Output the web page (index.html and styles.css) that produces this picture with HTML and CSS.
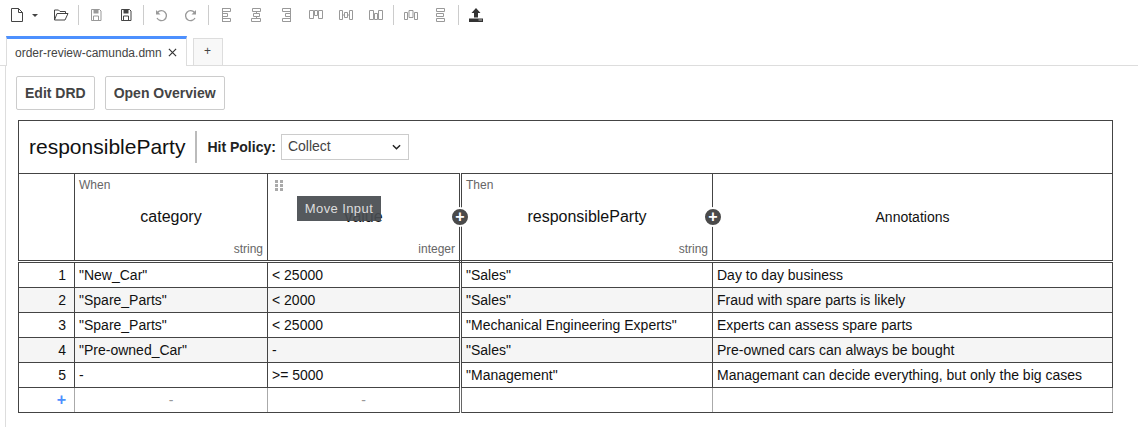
FILE: index.html
```html
<!DOCTYPE html>
<html lang="en">
<head>
<meta charset="utf-8">
<title>order-review-camunda.dmn</title>
<link rel="stylesheet" href="styles.css">
</head>
<body>
<div class="toolbar">
  <div class="group group-file">
    <svg class="ico dark" viewBox="0 0 16 16"><path d="M3.500 1.500h7l4 4v9h-11z M10.500 1.500v4h4"/></svg>
    <svg class="caret" viewBox="0 0 6 3"><path d="M0 0h6L3 3z"/></svg>
    <svg class="ico dark" viewBox="0 0 16 16"><path d="M1.500 13V3h4L7 4.500h5.500v2 M1.500 13H12l3-6.500H4z"/></svg>
  </div>
  <i class="sep"></i>
  <div class="group">
    <svg class="ico grey" viewBox="0 0 16 16"><path d="M3.500 2.500h8l1.500 1.500v9.500H3.500z"/><path class="fill" d="M5.500 3h5v3.500h-5z"/><path d="M5.500 9h5v4.500h-5z"/></svg>
    <svg class="ico dark" viewBox="0 0 16 16"><path d="M3.500 2.500h8l1.500 1.500v9.500H3.500z"/><path class="fill" d="M5.500 3h5v3.500h-5z"/><path d="M5.500 9h5v4.500h-5z"/></svg>
  </div>
  <i class="sep"></i>
  <div class="group">
    <svg class="ico grey wide" viewBox="0 0 16 16"><path d="M4.500 5.500A5 5 0 1 1 4 11"/><path class="fill" d="M3 3v4.500h4.500z"/></svg>
    <svg class="ico grey wide" viewBox="0 0 16 16"><path d="M11.500 5.500A5 5 0 1 0 12 11"/><path class="fill" d="M13 3v4.500H8.500z"/></svg>
  </div>
  <i class="sep"></i>
  <div class="group">
    <svg class="ico grey" viewBox="0 0 16 16"><path d="M4.500 1v14M4.500 1.500h8v3h-8M4.500 6.500h5v3h-5M4.500 11.500h8v3h-8"/></svg>
    <svg class="ico grey" viewBox="0 0 16 16"><path d="M4.500 1.500h8v3h-8zM5.500 6.500h6v3h-6zM3.500 11.500h9v3h-9zM8.500 4.500v2M8.500 9.500v2"/></svg>
    <svg class="ico grey" viewBox="0 0 16 16"><path d="M12.500 1v14M12.500 1.500h-8v3h8M12.500 6.500h-5v3h5M12.500 11.500h-8v3h8"/></svg>
    <svg class="ico grey" viewBox="0 0 16 16"><path d="M1.500 3.500h4v8h-4zM6.500 3.500h3v5h-3zM10.500 3.500h4v8h-4z"/></svg>
    <svg class="ico grey" viewBox="0 0 16 16"><path d="M1.500 3.500h3v9h-3zM6.500 5.500h3v5h-3zM11.500 3.500h3v9h-3zM4.500 8h2M9.500 8h2"/></svg>
    <svg class="ico grey" viewBox="0 0 16 16"><path d="M1.500 3.500h4v9h-4zM6.500 6.500h3v6h-3zM10.500 3.500h4v9h-4z"/></svg>
  </div>
  <i class="sep"></i>
  <div class="group">
    <svg class="ico grey" viewBox="0 0 16 16"><path d="M1.500 5.500h3v7h-3zM6 3.500h4v7H6zM11.500 5.500h3v7h-3z"/></svg>
    <svg class="ico grey" viewBox="0 0 16 16"><path d="M3.500 1.500h8v3h-8zM3.500 6.500h7v3h-7zM3.500 11.500h8v3h-8z"/></svg>
  </div>
  <i class="sep"></i>
  <div class="group">
    <svg class="ico solid" viewBox="0 0 16 16"><path d="M8 1l4.500 5H10v4.500H6V6H3.500zM1 11.500h14V15H1z"/><path class="slot" d="M10.500 12.500H14v1h-3.500z"/></svg>
  </div>
</div>

<div class="tabbar">
  <div class="tab">
    <span>order-review-camunda.dmn</span>
    <svg class="close" viewBox="0 0 10 10"><path d="M1 1l8 8M9 1l-8 8"/></svg>
  </div>
  <div class="tab-add">+</div>
</div>

<main class="editor">
  <div class="actions">
    <button class="btn">Edit DRD</button>
    <button class="btn">Open Overview</button>
  </div>

  <section class="decision">
    <header class="decision-head">
      <h1 class="decision-name">responsibleParty</h1>
      <b class="policy-label">Hit Policy:</b>
      <div class="policy-select"><span class="policy-value">Collect</span>
        <svg class="chev" viewBox="0 0 10 6"><path d="M1 1l4 4 4-4"/></svg>
      </div>
    </header>
    <table class="grid">
      <colgroup>
        <col class="c-idx"><col class="c-in"><col class="c-in2"><col class="c-out"><col class="c-ann">
      </colgroup>
      <thead>
        <tr>
          <th></th>
          <th><div class="hcell"><small class="kind">When</small><span class="hname">category</span><small class="htype">string</small></div></th>
          <th class="double"><div class="hcell">
            <span class="handle"><i></i><i></i><i></i><i></i><i></i><i></i></span>
            <span class="hname">value</span><small class="htype">integer</small>
            <span class="tooltip">Move Input</span>
            <span class="plus">+</span>
          </div></th>
          <th><div class="hcell"><small class="kind">Then</small><span class="hname">responsibleParty</span><small class="htype">string</small>
            <span class="plus">+</span>
          </div></th>
          <th><div class="hcell"><span class="hname ann">Annotations</span></div></th>
        </tr>
      </thead>
      <tbody>
        <tr><td class="idx">1</td><td>"New_Car"</td><td class="double">&lt; 25000</td><td>"Sales"</td><td>Day to day business</td></tr>
        <tr><td class="idx">2</td><td>"Spare_Parts"</td><td class="double">&lt; 2000</td><td>"Sales"</td><td>Fraud with spare parts is likely</td></tr>
        <tr><td class="idx">3</td><td>"Spare_Parts"</td><td class="double">&lt; 25000</td><td>"Mechanical Engineering Experts"</td><td>Experts can assess spare parts</td></tr>
        <tr><td class="idx">4</td><td>"Pre-owned_Car"</td><td class="double">-</td><td>"Sales"</td><td>Pre-owned cars can always be bought</td></tr>
        <tr><td class="idx">5</td><td>-</td><td class="double">&gt;= 5000</td><td>"Management"</td><td>Managemant can decide everything, but only the big cases</td></tr>
      </tbody>
      <tfoot>
        <tr><td class="idx add">+</td><td class="ghost">-</td><td class="ghost double">-</td><td class="ghost"></td><td class="ghost"></td></tr>
      </tfoot>
    </table>
  </section>
</main>
</body>
</html>
```
FILE: styles.css
```css
* { box-sizing: border-box; }
html, body { margin: 0; height: 100%; overflow: hidden; background: #fff; }
body { font-family: "Liberation Sans", Arial, sans-serif; font-size: 14px; color: #333; }

.toolbar { display: flex; align-items: center; height: 30px; padding-left: 8px; }
.group { display: flex; align-items: center; gap: 14px; }
.group-file { gap: 0; }
.group-file .caret { margin: 0 15px 0 8px; }
.sep { width: 1px; height: 20px; background: #ccc; margin: 0 9px; }
.ico { width: 16px; height: 16px; fill: none; stroke-width: 1; }
.ico.dark { stroke: #444; }
.ico.dark .fill { fill: #444; stroke: none; }
.ico.grey { stroke: #999; }
.ico.grey.wide { stroke-width: 1.300; }
.ico.grey .fill { fill: #999; stroke: none; }
.ico.solid { fill: #333; stroke: none; }
.ico.solid .slot { fill: #bbb; }
.caret { width: 6px; height: 3px; fill: #444; }

.tabbar { display: flex; align-items: flex-end; height: 36px; padding-left: 6px; border-bottom: 1px solid #ddd; }
.tab { display: flex; align-items: center; gap: 6px; width: 181px; height: 30px; margin-bottom: -1px; padding: 0 8px; background: #fff; border: 1px solid #ddd; border-top: 3px solid #4d90fe; border-bottom: 0; font-size: 12px; color: #444; white-space: nowrap; }
.close { width: 9px; height: 9px; stroke: #333; stroke-width: 1.300; fill: none; flex: none; }
.tab-add { width: 30px; height: 27px; margin-left: 6px; padding: 0 1px 2px 0; border: 1px solid #ddd; border-bottom: 0; background: #f8f8f8; display: flex; align-items: center; justify-content: center; font-size: 12px; color: #444; }

.editor { border-left: 1px solid #ddd; margin-left: 5px; padding: 10px 0 0 10px; height: 362px; }
.actions { display: flex; gap: 10px; }
.btn { height: 34px; padding: 0 8px; background: #fff; border: 1px solid #ccc; border-radius: 2px; font: bold 14px "Liberation Sans", Arial, sans-serif; color: #444; }

.decision { width: 1095px; margin: 10px 0 0 2px; color: #111; }
.decision-head { display: flex; align-items: center; height: 53px; padding-left: 10px; border: 1px solid #444; border-bottom: 0; }
.decision-name { margin: 0; padding-right: 10px; height: 32px; line-height: 32px; border-right: 2px solid #bbb; font-size: 21px; font-weight: normal; }
.policy-label { margin-left: 10px; margin-right: 5px; color: #222; }
.policy-select { display: flex; align-items: center; justify-content: space-between; width: 128px; height: 26px; padding: 0 7px 2px 6px; border: 1px solid #ccc; color: #444; }
.chev { width: 9px; height: 6px; margin-top: 2px; fill: none; stroke: #222; stroke-width: 1.600; }

.grid { width: 1094px; table-layout: fixed; border-collapse: collapse; }
.c-idx { width: 56px; }
.c-in { width: 193px; }
.c-in2 { width: 193px; }
.c-out { width: 252px; }
.c-ann { width: 400px; }
.grid th, .grid td { border: 1px solid #444; padding: 0 4px; height: 25px; font-weight: normal; white-space: nowrap; }
.grid th { padding: 0; height: 87px; border-bottom: 3px double #444; }
.grid .double { border-right: 3px double #444; }
.grid tbody tr:first-child td { height: 26px; }
.grid tbody tr:nth-child(even) td { background: #f5f5f5; }
.idx { text-align: right; padding-right: 8px !important; }

.hcell { position: relative; height: 86px; display: flex; align-items: center; justify-content: center; }
.kind { position: absolute; left: 4px; top: 4px; font-size: 12px; color: #666; }
.htype { position: absolute; right: 4px; bottom: 4px; font-size: 12px; color: #666; }
.hname { font-size: 16px; margin-top: -1px; color: #111; }
.hname.ann { font-size: 14px; }
.handle { position: absolute; left: 7px; top: 6px; display: grid; grid-template-columns: 3px 3px; gap: 1px 2px; }
.handle i { width: 3px; height: 3px; background: #aaa; }
.tooltip { position: absolute; left: 29px; top: 22px; width: 84px; height: 25px; display: flex; align-items: center; justify-content: center; background: rgba(72, 76, 81, .93); color: #ddd; font-size: 13px; letter-spacing: .4px; }
.plus { position: absolute; right: -11px; top: 33px; z-index: 1; width: 20px; height: 20px; border: 2px solid #fff; border-radius: 50%; background: #4a4a4a; color: #fff; font: bold 16px/15px "Liberation Sans", Arial, sans-serif; text-align: center; }

.grid .add { border-right-color: #aaa; color: #4d90fe; font-size: 16px; font-weight: bold; }
.grid .ghost { border-left-color: #aaa; border-right-color: #aaa; text-align: center; color: #999; }
.grid .ghost.double { border-right: 3px double #666; }
```
